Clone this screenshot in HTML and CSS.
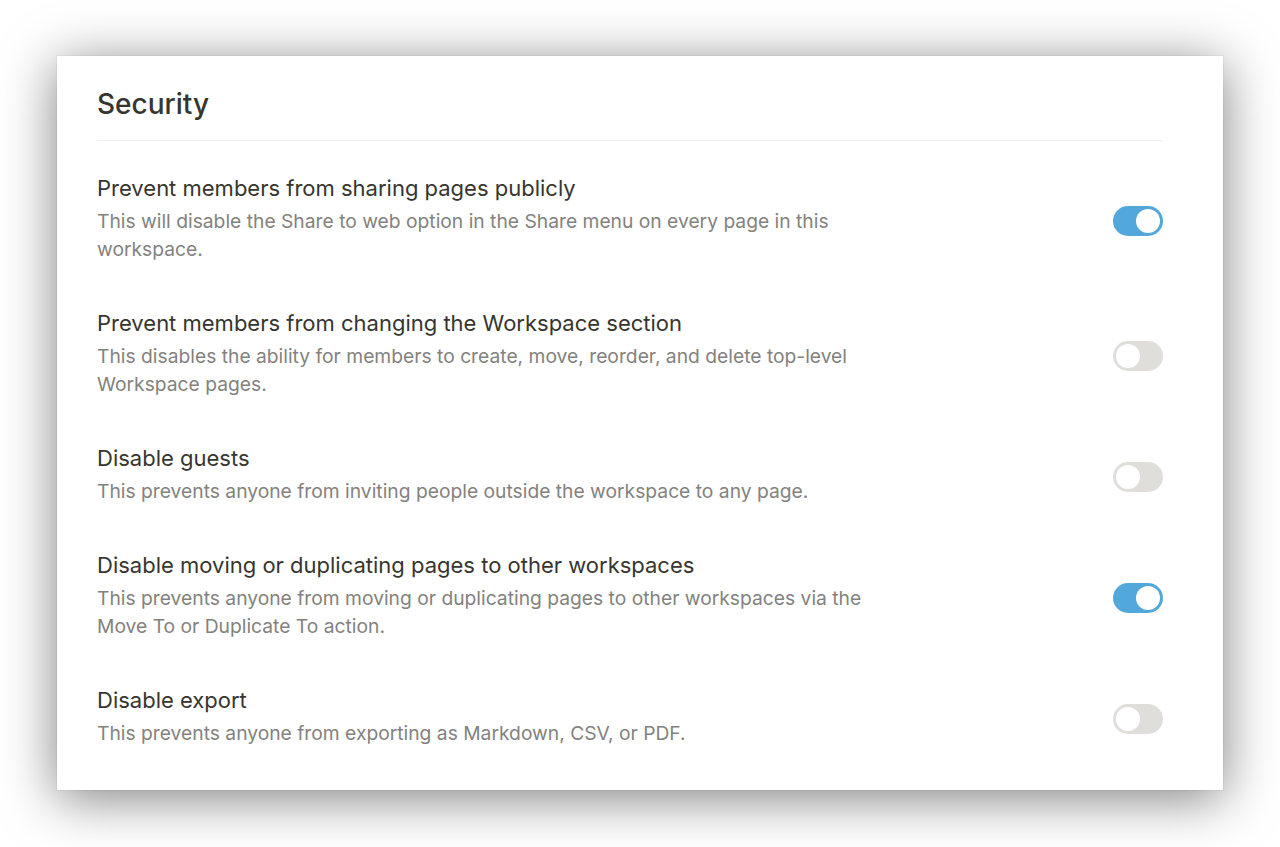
FILE: index.html
```html
<!DOCTYPE html>
<html lang="en">
<head>
<meta charset="utf-8">
<title>Security</title>
<link rel="stylesheet" href="styles.css">
</head>
<body>
<div class="stage">
  <section class="card">
    <h1 class="heading">Security</h1>
    <div class="divider"></div>
    <div class="rows">
      <div class="row">
        <div class="text">
          <div class="title">Prevent members from sharing pages publicly</div>
          <div class="desc">This will disable the Share to web option in the Share menu on every page in this workspace.</div>
        </div>
        <div class="toggle on"><span class="knob"></span></div>
      </div>
      <div class="row">
        <div class="text">
          <div class="title">Prevent members from changing the Workspace section</div>
          <div class="desc">This disables the ability for members to create, move, reorder, and delete top-level Workspace pages.</div>
        </div>
        <div class="toggle"><span class="knob"></span></div>
      </div>
      <div class="row">
        <div class="text">
          <div class="title">Disable guests</div>
          <div class="desc">This prevents anyone from inviting people outside the workspace to any page.</div>
        </div>
        <div class="toggle"><span class="knob"></span></div>
      </div>
      <div class="row">
        <div class="text">
          <div class="title">Disable moving or duplicating pages to other workspaces</div>
          <div class="desc">This prevents anyone from moving or duplicating pages to other workspaces via the Move To or Duplicate To action.</div>
        </div>
        <div class="toggle on"><span class="knob"></span></div>
      </div>
      <div class="row">
        <div class="text">
          <div class="title">Disable export</div>
          <div class="desc">This prevents anyone from exporting as Markdown, CSV, or PDF.</div>
        </div>
        <div class="toggle"><span class="knob"></span></div>
      </div>
    </div>
  </section>
</div>
</body>
</html>
```

FILE: styles.css
```css
* { box-sizing: border-box; }
html, body {
  margin: 0;
  padding: 0;
  background: #ffffff;
}
body {
  font-family: Inter, "Liberation Sans", Arial, sans-serif;
  color: #37352f;
  -webkit-font-smoothing: antialiased;
}
.stage {
  width: 1280px;
  height: 847px;
  padding: 56px 57px 0 57px;
}
.card {
  width: 1166px;
  height: 734px;
  background: #ffffff;
  box-shadow: 0 8px 50px rgba(0, 0, 0, 0.5), 0 0 0 1px rgba(0, 0, 0, 0.04);
  padding: 30px 60px 0 40px;
}
.heading {
  margin: 0;
  font-size: 28px;
  line-height: 36px;
  font-weight: 500;
  color: #37352f;
}
.divider {
  height: 1px;
  background: #ededec;
  margin-top: 18px;
}
.rows {
  margin-top: 32px;
  display: flex;
  flex-direction: column;
  gap: 45px;
}
.row {
  display: flex;
  align-items: center;
  justify-content: space-between;
}
.text {
  width: 790px;
}
.title {
  font-size: 22px;
  line-height: 30px;
  color: #37352f;
  margin-bottom: 4px;
}
.desc {
  font-size: 19.25px;
  line-height: 28px;
  color: #83827e;
}
.toggle {
  width: 50px;
  height: 30px;
  border-radius: 15px;
  background: #dfdedb;
  padding: 3px;
  display: flex;
  justify-content: flex-start;
  margin-top: 5px;
  flex-shrink: 0;
}
.toggle.on {
  background: #52a8db;
  justify-content: flex-end;
}
.knob {
  width: 24px;
  height: 24px;
  border-radius: 50%;
  background: #ffffff;
}
```
